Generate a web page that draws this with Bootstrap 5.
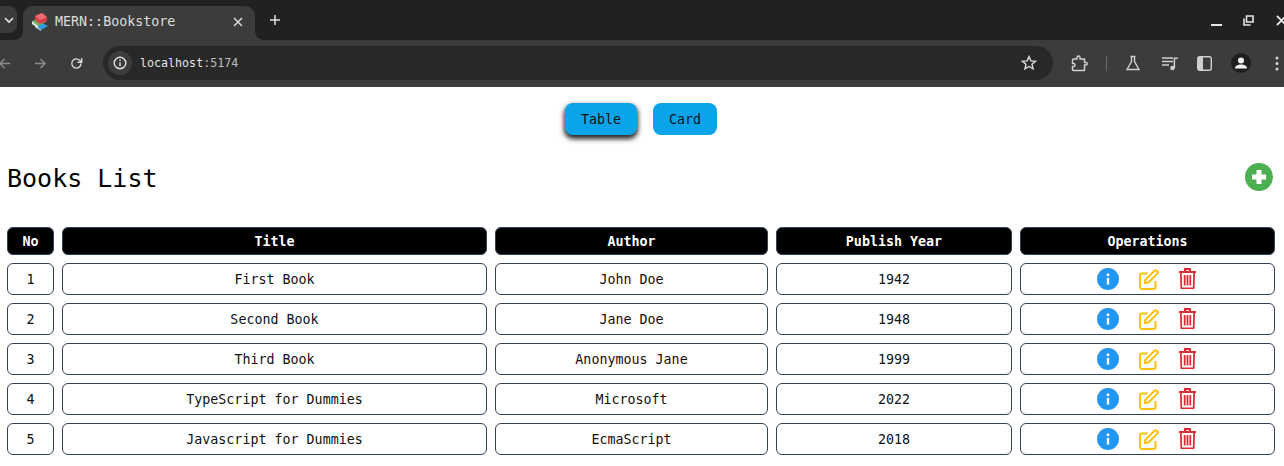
<!doctype html>
<html lang="en">
<head>
<meta charset="utf-8">
<title>MERN::Bookstore</title>
<link href="https://cdn.jsdelivr.net/npm/bootstrap@5.3.0/dist/css/bootstrap.min.css" rel="stylesheet">
<style>
html,body{margin:0;background:#fff;overflow:hidden;height:466px}
body{font-family:"DejaVu Sans Mono","Liberation Mono",monospace;font-size:13.33px;color:#111}
.sprite{display:none}
.tabstrip{height:40px;background:#202221;color:#e3e3e3}
.tabchip{width:17px;height:27px;margin-top:6px;background:#3a3a3a;border-radius:0 8px 8px 0}
.tabitem{position:relative;width:232px;height:34px;margin-top:6px;margin-left:6px;background:#3c3c3c;border-radius:10px 10px 0 0;padding:0 12px 2px 8px;font-size:13.33px}
.tabitem::before,.tabitem::after{content:"";position:absolute;bottom:0;width:8px;height:8px}
.tabitem::before{left:-8px;background:radial-gradient(circle at 0 0,transparent 7.5px,#3c3c3c 8px)}
.tabitem::after{right:-8px;background:radial-gradient(circle at 100% 0,transparent 7.5px,#3c3c3c 8px)}
.tabtitle{color:#dcdcdc;margin-left:6px}
.newtab{margin-left:15px;padding-bottom:1px}
.winctl{margin-left:auto;margin-right:-3px}
.winctl .ctl-mid{margin:0 22px 0 21px}
.toolbar{height:47px;background:#3c3c3c;padding-bottom:1px}
.omni{width:950px;height:34px;margin-left:9px;background:#282828;border-radius:17px;padding:0 16px 0 5px;color:#e3e3e3;font-size:11.67px}
.omni-i{width:24px;height:24px;border-radius:50%;background:#3c3c3c;margin-right:8px}
.omni-url{padding-top:2px}
.port{color:#bdbdbd}
.navzone{width:96px;margin-left:-2px;gap:23px}
.tools{margin-left:18px}
.vrule{width:1px;height:15px;background:#6a6a6a;margin-left:18px}
.tool-flask{margin-left:18px}
.tool-queue{margin-left:21px}
.tool-side{margin-left:18px}
.tool-user{margin-left:19px}
.tool-dots{margin-left:24px}
.viewbar{height:48px;padding:16px 2px 0 0;gap:16px}
.viewbtn{height:32px;padding:1px 0 0;border:0;border-radius:8px;background:#0ca4e9;color:#111;font-size:13.33px;font-family:inherit}
.viewbtn-a{width:72px;box-shadow:0 3px 5px 1px rgba(0,0,0,.85)}
.viewbtn-b{width:64px}
.headrow{padding:0 11px 0 7px;height:28px;margin-top:28px}
.booktitle{font-family:inherit;font-size:25px;font-weight:400;line-height:28px;padding-top:4px;margin:0;color:#000}
.booktable{border-collapse:separate;border-spacing:8px;table-layout:fixed;width:1284px;margin:28px 0 0 -1px;font-size:13.33px}
.booktable th,.booktable td{border:1px solid #334155;border-radius:6px;text-align:center;padding:2px 0 0;vertical-align:middle}
.booktable th{height:28px;background:#000;color:#fff;font-weight:700}
.booktable td{height:32px}
.booktable td.opscell{padding:0}
.col-no{width:47px}.col-title{width:425px}.col-author{width:273px}.col-year{width:236px}
.opsline{gap:20px;padding-right:1px}
.opsline svg{display:block}
.opsline .bin{margin-bottom:1px}
</style>
</head>
<body>
<svg class="sprite" aria-hidden="true">
  <symbol id="ico-info" viewBox="0 0 22 22"><circle cx="11" cy="11" r="11" fill="#2196f3"/><path d="M11 10v6.500" stroke="#fff" stroke-width="2.400"/><circle cx="11" cy="6.800" r="1.500" fill="#fff"/></symbol>
  <symbol id="ico-edit" viewBox="0 0 20 21"><path d="M8.500 4.500H3a2 2 0 0 0-2 2V18a2 2 0 0 0 2 2h11.500a2 2 0 0 0 2-2v-6" fill="none" stroke="#ffc107" stroke-width="2"/><path d="M6.500 10.500L15.500 1.800a2 2 0 0 1 2.800 2.800L9.500 13.500l-3.500.5z" fill="none" stroke="#ffc107" stroke-width="2" stroke-linejoin="round"/></symbol>
  <symbol id="ico-trash" viewBox="0 0 18 21"><path d="M6 3.500V1h5v2.500M0 4h17" fill="none" stroke="#dc2f35" stroke-width="2"/><path d="M1.800 4l.5 15.500a1 1 0 0 0 1 1h10.400a1 1 0 0 0 1-1L15.200 4M5.700 7v10.500M8.500 7v10.500M11.300 7v10.500" fill="none" stroke="#dc2f35" stroke-width="1.800"/></symbol>
</svg>
<div class="tabstrip d-flex">
  <div class="tabchip d-flex align-items-center justify-content-center">
    <svg width="10" height="10" viewBox="0 0 10 10"><path d="M1 3l4 4 4-4" fill="none" stroke="#e3e3e3" stroke-width="1.600"/></svg>
  </div>
  <div class="tabitem d-flex align-items-center">
    <svg width="18" height="18" viewBox="0 0 18 18">
      <path d="M4 12l7-2 6 3-7 4z" fill="#2f9bd8"/><path d="M4 12l6 5v1l-6-4z" fill="#dfe8ec"/>
      <path d="M1 8l8-3 6 4-8 4z" fill="#6cb35a"/><path d="M1 8l6 5v2L1 11z" fill="#e8efe6"/>
      <path d="M4 3l7-3 5 4v4l-7 3-5-4z" fill="#d8404a"/><path d="M4 3l7-3 5 4-7 3z" fill="#ea6a72"/>
    </svg>
    <span class="tabtitle flex-grow-1">MERN::Bookstore</span>
    <svg width="10" height="10" viewBox="0 0 10 10"><path d="M1 1l8 8M9 1l-8 8" stroke="#e3e3e3" stroke-width="1.400"/></svg>
  </div>
  <div class="newtab d-flex align-items-center">
    <svg width="10" height="10" viewBox="0 0 10 10"><path d="M5 0v10M0 5h10" stroke="#e3e3e3" stroke-width="1.500"/></svg>
  </div>
  <div class="winctl d-flex align-items-center">
    <svg width="11" height="13" viewBox="0 0 11 13"><path d="M0 11h11" stroke="#e6e6e6" stroke-width="2"/></svg>
    <svg class="ctl-mid" width="11" height="11" viewBox="0 0 11 11"><path d="M3.500 1h6.500v6H3.500zM1 3.500V10h6.500" fill="none" stroke="#e6e6e6" stroke-width="1.600"/></svg>
    <svg width="11" height="11" viewBox="0 0 11 11"><path d="M1 1l9 9M10 1l-9 9" stroke="#e6e6e6" stroke-width="1.800"/></svg>
  </div>
</div>
<div class="toolbar d-flex align-items-center">
  <div class="navzone d-flex align-items-center">
    <svg width="13" height="13" viewBox="0 0 13 13"><path d="M12 6.500H2M6.500 2L2 6.500 6.500 11" fill="none" stroke="#8b8b8b" stroke-width="1.500"/></svg>
    <svg width="13" height="13" viewBox="0 0 13 13"><path d="M1 6.500h10M6.500 2L11 6.500 6.500 11" fill="none" stroke="#8b8b8b" stroke-width="1.500"/></svg>
    <svg width="13" height="13" viewBox="0 0 13 13"><path d="M11 6.500A4.600 4.600 0 1 1 9.600 3.200L11.500 5M11.700 1v4.200H7.500" fill="none" stroke="#d6d6d6" stroke-width="1.400"/></svg>
  </div>
  <div class="omni d-flex align-items-center">
    <div class="omni-i d-flex align-items-center justify-content-center">
      <svg width="14" height="14" viewBox="0 0 14 14"><circle cx="7" cy="7" r="5.800" fill="none" stroke="#e3e3e3" stroke-width="1.400"/><path d="M7 6.200v4M7 3.600v1.500" stroke="#e3e3e3" stroke-width="1.400"/></svg>
    </div>
    <span class="omni-url">localhost<span class="port">:5174</span></span>
    <svg class="ms-auto" width="16" height="16" viewBox="0 0 16 16"><path d="M8 1.600l1.900 4.300 4.600.4-3.500 3 1.100 4.600L8 11.500l-4.100 2.400L5 9.300l-3.500-3 4.600-.4z" fill="none" stroke="#dcdcdc" stroke-width="1.400"/></svg>
  </div>
  <div class="tools d-flex align-items-center">
    <svg width="17" height="17" viewBox="0 0 17 17"><path d="M2 4h4V2.500a1.500 1.500 0 0 1 3 0V4h4.500v3.500h1.500a1 1 0 0 1 0 2.500h-1.500v5.500H2.500a1 1 0 0 1-1-1v-3h1a1.500 1.500 0 0 0 0-3h-1V5z" fill="none" stroke="#cfcfcf" stroke-width="1.500" stroke-linejoin="round"/></svg>
    <div class="vrule"></div>
    <svg class="tool-flask" width="16" height="16" viewBox="0 0 16 16"><path d="M5.500 1.500h5M6.500 1.500v5L2 14.500h12L9.500 6.500v-5" fill="none" stroke="#cfcfcf" stroke-width="1.400"/></svg>
    <svg class="tool-queue" width="17" height="15" viewBox="0 0 17 15"><path d="M0 2h11M0 5.500h11M0 9h7" stroke="#cfcfcf" stroke-width="1.400"/><circle cx="10.500" cy="12" r="2.300" fill="#cfcfcf"/><path d="M12.400 12V2.200H16" fill="none" stroke="#cfcfcf" stroke-width="1.500"/></svg>
    <svg class="tool-side" width="15" height="15" viewBox="0 0 15 15"><rect x=".7" y=".7" width="13.600" height="13.600" rx="2" fill="none" stroke="#cfcfcf" stroke-width="1.400"/><rect x="1" y="1" width="5" height="13" fill="#cfcfcf"/></svg>
    <svg class="tool-user" width="20" height="20" viewBox="0 0 20 20"><circle cx="10" cy="10" r="10" fill="#1f1f1f"/><circle cx="10" cy="7.500" r="3" fill="#f1f1f1"/><path d="M4 15.500c0-3 3-4 6-4s6 1 6 4z" fill="#f1f1f1"/></svg>
    <svg class="tool-dots" width="4" height="15" viewBox="0 0 4 15"><circle cx="2" cy="2" r="1.500" fill="#d6d6d6"/><circle cx="2" cy="7.500" r="1.500" fill="#d6d6d6"/><circle cx="2" cy="13" r="1.500" fill="#d6d6d6"/></svg>
  </div>
</div>

<main>
  <div class="viewbar d-flex justify-content-center">
    <button class="viewbtn viewbtn-a" type="button">Table</button>
    <button class="viewbtn viewbtn-b" type="button">Card</button>
  </div>
  <div class="headrow d-flex justify-content-between align-items-center">
    <h1 class="booktitle">Books List</h1>
    <svg width="28" height="28" viewBox="0 0 28 28"><circle cx="14" cy="14" r="14" fill="#4caf50"/><path d="M14 7v14M7 14h14" stroke="#fff" stroke-width="5"/></svg>
  </div>
  <table class="booktable">
    <colgroup><col class="col-no"><col class="col-title"><col class="col-author"><col class="col-year"><col></colgroup>
    <thead><tr><th>No</th><th>Title</th><th>Author</th><th>Publish Year</th><th>Operations</th></tr></thead>
    <tbody>
      <tr><td>1</td><td>First Book</td><td>John Doe</td><td>1942</td><td class="opscell"><div class="opsline d-flex justify-content-center align-items-center">
        <svg width="22" height="22"><use href="#ico-info"/></svg><svg width="20" height="21"><use href="#ico-edit"/></svg><svg class="bin" width="18" height="21"><use href="#ico-trash"/></svg>
      </div></td></tr>
      <tr><td>2</td><td>Second Book</td><td>Jane Doe</td><td>1948</td><td class="opscell"><div class="opsline d-flex justify-content-center align-items-center">
        <svg width="22" height="22"><use href="#ico-info"/></svg><svg width="20" height="21"><use href="#ico-edit"/></svg><svg class="bin" width="18" height="21"><use href="#ico-trash"/></svg>
      </div></td></tr>
      <tr><td>3</td><td>Third Book</td><td>Anonymous Jane</td><td>1999</td><td class="opscell"><div class="opsline d-flex justify-content-center align-items-center">
        <svg width="22" height="22"><use href="#ico-info"/></svg><svg width="20" height="21"><use href="#ico-edit"/></svg><svg class="bin" width="18" height="21"><use href="#ico-trash"/></svg>
      </div></td></tr>
      <tr><td>4</td><td>TypeScript for Dummies</td><td>Microsoft</td><td>2022</td><td class="opscell"><div class="opsline d-flex justify-content-center align-items-center">
        <svg width="22" height="22"><use href="#ico-info"/></svg><svg width="20" height="21"><use href="#ico-edit"/></svg><svg class="bin" width="18" height="21"><use href="#ico-trash"/></svg>
      </div></td></tr>
      <tr><td>5</td><td>Javascript for Dummies</td><td>EcmaScript</td><td>2018</td><td class="opscell"><div class="opsline d-flex justify-content-center align-items-center">
        <svg width="22" height="22"><use href="#ico-info"/></svg><svg width="20" height="21"><use href="#ico-edit"/></svg><svg class="bin" width="18" height="21"><use href="#ico-trash"/></svg>
      </div></td></tr>
    </tbody>
  </table>
</main>
<script src="https://cdn.jsdelivr.net/npm/bootstrap@5.3.0/dist/js/bootstrap.bundle.min.js"></script>
</body>
</html>
